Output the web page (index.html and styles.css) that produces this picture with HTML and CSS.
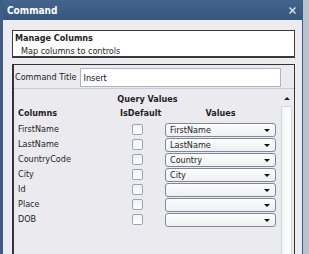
FILE: index.html
```html
<!DOCTYPE html>
<html lang="en">
<head>
  <meta charset="UTF-8">
  <title>Command</title>
  <link rel="stylesheet" href="styles.css">
</head>
<body>

  <div class="window">
    <!-- title bar -->
    <div class="titlebar">
      <span class="title">Command</span>
      <svg class="close" width="7" height="7" viewBox="0 0 7 7">
        <path d="M0.5 0.5 L6.5 6.5 M6.5 0.5 L0.5 6.5" stroke="#e4e8ee" stroke-width="1.4" />
      </svg>
    </div>

    <div class="content">
      <div class="info-box">
        <div class="info-title">Manage Columns</div>
        <div class="info-desc">Map columns to controls</div>
      </div>

      <div class="form-box">
        <div class="title-row">
          <label class="title-label">Command Title</label>
          <input class="title-input" type="text" value="Insert">
        </div>

        <div class="scroll-area">
          <div class="scroll-content">
            <div class="section-head">Query Values</div>
            <div class="map-grid" id="map-grid">
              <div class="head">Columns</div>
              <div class="head">IsDefault</div>
              <div class="head head-values">Values</div>
            </div>
          </div>
          <div class="scrollbar">
            <div class="arrow-up"></div>
            <div class="track"></div>
          </div>
        </div>
      </div>
    </div>
  </div>

  <script>
    const grid = document.getElementById('map-grid');
    const rows = [
      ['FirstName', 'FirstName'],
      ['LastName', 'LastName'],
      ['CountryCode', 'Country'],
      ['City', 'City'],
      ['Id', ''],
      ['Place', ''],
      ['DOB', '']
    ];

    // 列ごとの行を作成
    rows.forEach(([name, value]) => {
      const col = document.createElement('div');
      col.className = 'cell-name';
      col.textContent = name;

      const chk = document.createElement('div');
      chk.className = 'cell-check';
      chk.innerHTML = '<span class="checkbox"></span>';

      const val = document.createElement('div');
      val.className = 'cell-value';
      val.innerHTML = `<div class="dropdown"><span>${value}</span><span class="caret"></span></div>`;

      grid.append(col, chk, val);
    });
  </script>

</body>
</html>
```

FILE: styles.css
```css
* { margin: 0; padding: 0; box-sizing: border-box; }
body {
  font-family: "DejaVu Sans Condensed", "DejaVu Sans", sans-serif;
  font-size: 9px;
  color: #1e1e1e;
  background: #b8c2ce;
  overflow: hidden;
}
.window {
  width: 303px;
  height: 254px;
  border-left: 3px solid #3e5e85;
  border-right: 1px solid #3e5e85;
  background: #ebebf0;
  display: flex;
  flex-direction: column;
}
.titlebar {
  height: 20px;
  flex: none;
  background: linear-gradient(#43648c, #35567d);
  display: flex;
  align-items: center;
  justify-content: space-between;
  padding: 0 6px 0 4px;
  color: #fff;
  font-weight: bold;
  font-size: 10px;
}
.content {
  flex: 1;
  min-height: 0;
  display: flex;
  flex-direction: column;
  gap: 6px;
  padding: 10px 7px 0 9px;
}
.info-box {
  height: 28px;
  flex: none;
  background: #fff;
  border: 1px solid #3a3a3a;
  border-bottom-width: 2px;
  padding-left: 2px;
  line-height: 14px;
}
.info-title { font-weight: bold; }
.info-desc { padding-left: 6px; margin-top: -1px; }
.form-box {
  flex: 1;
  min-height: 0;
  display: flex;
  flex-direction: column;
  border: 1px solid #333;
  border-left-width: 2px;
  border-bottom: none;
  background: #ebebef;
}
.title-row {
  height: 24px;
  flex: none;
  display: flex;
  align-items: center;
  gap: 3px;
  padding: 0 13px 0 1px;
  border-bottom: 1px solid #c9ccd3;
}
.title-input {
  flex: 1;
  height: 19px;
  margin-top: 2px;
  border: 1px solid #a8b7c7;
  background: #fff;
  font: inherit;
  color: #111;
  padding-left: 3px;
  outline: none;
}
.scroll-area {
  flex: 1;
  min-height: 0;
  display: flex;
}
.scroll-content { flex: 1; }
.section-head {
  text-align: center;
  font-weight: bold;
  line-height: 14px;
  padding-top: 3px;
}
.map-grid {
  display: grid;
  grid-template-columns: 102px 45px 111px;
  grid-auto-rows: 15px;
  padding-left: 4px;
  margin-top: 1px;
}
.head {
  font-weight: bold;
  line-height: 12px;
  height: 12px;
}
.head-values { text-align: center; }
.cell-name { line-height: 15px; padding-top: 0; }
.cell-check { padding: 2px 0 0 12px; }
.checkbox {
  display: block;
  width: 11px;
  height: 11px;
  border: 1px solid #9aa5b3;
  border-radius: 2px;
  background: linear-gradient(#f0f2f5, #fff);
}
.cell-value { padding-top: 1px; }
.dropdown {
  height: 14px;
  border: 1px solid #7d8898;
  border-radius: 3px;
  background: linear-gradient(#fdfdfd, #eef0f3);
  display: flex;
  align-items: center;
  justify-content: space-between;
  padding: 0 5px 0 4px;
  line-height: 12px;
}
.caret {
  width: 0;
  height: 0;
  border-left: 3px solid transparent;
  border-right: 3px solid transparent;
  border-top: 3px solid #111;
}
.scrollbar {
  width: 11px;
  margin: 4px 2px 0 0;
  display: flex;
  flex-direction: column;
  gap: 3px;
}
.arrow-up {
  height: 10px;
  display: flex;
  align-items: center;
  justify-content: center;
}
.arrow-up::before {
  content: "";
  border-left: 3px solid transparent;
  border-right: 3px solid transparent;
  border-bottom: 3px solid #222;
}
.track {
  flex: 1;
  border: 1px solid #d3d7dd;
  border-bottom: none;
  border-radius: 2px 2px 0 0;
  background: linear-gradient(to right, #f4f5f7, #fff);
}
```
